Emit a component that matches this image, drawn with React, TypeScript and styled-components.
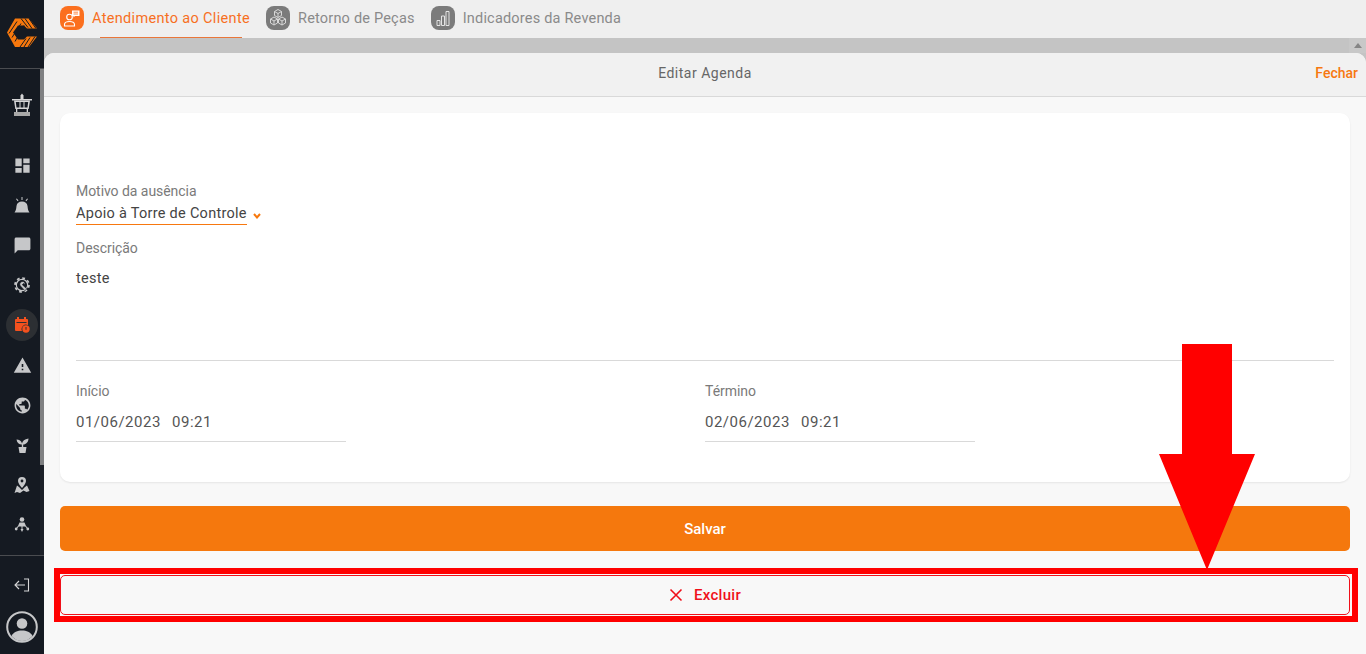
import React from "react";
import styled, { createGlobalStyle } from "styled-components";
import { MdDashboard, MdChatBubble, MdWarning, MdPublic } from "react-icons/md";

const Global = createGlobalStyle`
  html, body { margin: 0; padding: 0; height: 100%; overflow: hidden; background: #f8f8f8; }
  * { box-sizing: border-box; }
  body { font-family: "Roboto", "Liberation Sans", sans-serif; }
`;

const Page = styled.div`
  position: relative;
  display: flex;
  width: 1366px;
  height: 654px;
  overflow: hidden;
`;
const Sidebar = styled.aside`
  width: 44px;
  flex: none;
  background: #151a22;
  display: flex;
  flex-direction: column;
`;
const LogoBox = styled.div`
  height: 69px;
  border-bottom: 1px solid #4a4c50;
  display: flex;
  align-items: center;
  justify-content: center;
  padding: 0 0 4px 0;
`;
const NavArea = styled.div`
  height: 486px;
  display: flex;
`;
const NavList = styled.nav`
  width: 40px;
  padding-top: 16px;
  display: flex;
  flex-direction: column;
  align-items: center;
`;
const Track = styled.div`
  width: 4px;
  height: 100%;
  background: #1d2129;
`;
const Thumb = styled.div`
  width: 4px;
  height: 396px;
  background: #7f8082;
`;
const NavItem = styled.div<{ $active?: boolean; $gap?: boolean }>`
  width: 32px;
  height: 32px;
  margin: 4px 0;
  margin-bottom: ${(p) => (p.$gap ? "24px" : "4px")};
  margin-left: 4px;
  border-radius: 50%;
  display: flex;
  align-items: center;
  justify-content: center;
  color: #c6c7c9;
  background: ${(p) => (p.$active ? "#2c2f33" : "transparent")};
  flex: none;
`;
const SideFooter = styled.div`
  border-top: 1px solid #4a4c50;
  flex: 1;
  padding-top: 9px;
  display: flex;
  flex-direction: column;
  align-items: center;
  gap: 6px;
`;
const ExitSlot = styled(NavItem)`
  margin-left: 0;
`;
const Main = styled.main`
  flex: 1;
  display: flex;
  flex-direction: column;
  min-width: 0;
  background: #c4c4c4;
`;
const TabBar = styled.div`
  height: 38px;
  background: #efefef;
  display: flex;
  align-items: flex-start;
  padding: 6px 0 0 16px;
  flex: none;
`;
const Tab = styled.div<{ $active?: boolean }>`
  position: relative;
  display: flex;
  align-items: center;
  height: 24px;
  gap: 8px;
  margin-right: 16px;
  font-size: 14.5px;
  letter-spacing: ${(p) => (p.$active ? "0.33px" : "0.2px")};
  color: ${(p) => (p.$active ? "#f76f1f" : "#8a8a8a")};
  &::after {
    content: "";
    display: ${(p) => (p.$active ? "block" : "none")};
    position: absolute;
    left: 40px;
    width: 142px;
    top: 31px;
    height: 1px;
    background: #e9763a;
  }
`;
const TabIcon = styled.span<{ $active?: boolean }>`
  width: 24px;
  height: 24px;
  border-radius: 8px;
  background: ${(p) => (p.$active ? "#fb6f1e" : "#7b7b7b")};
  display: flex;
  align-items: center;
  justify-content: center;
  flex: none;
`;
const Band = styled.div`
  height: 15px;
  background: #c4c4c4;
  flex: none;
  display: flex;
  justify-content: flex-end;
`;
const ScrollUp = styled.div`
  width: 17px;
  background: #c8c8c8;
  display: flex;
  align-items: center;
  justify-content: center;
  &::before {
    content: "";
    border-left: 4px solid transparent;
    border-right: 4px solid transparent;
    border-bottom: 5px solid #858585;
  }
`;
const Sheet = styled.section`
  flex: 1;
  background: #f8f8f8;
  border-radius: 10px 10px 0 0;
  display: flex;
  flex-direction: column;
`;
const SheetHeader = styled.header`
  position: relative;
  height: 44px;
  flex: none;
  padding-bottom: 3px;
  background: #f1f1f1;
  border-radius: 10px 10px 0 0;
  border-bottom: 1px solid #d9d9d9;
  display: flex;
  align-items: center;
  justify-content: center;
  font-size: 14px;
  letter-spacing: 0.5px;
  color: #666;
`;
const Close = styled.span`
  position: absolute;
  right: 8px;
  top: 12px;
  font-size: 14px;
  font-weight: 500;
  letter-spacing: 0;
  color: #f7780f;
`;
const Body = styled.div`
  padding: 16px 16px 0;
  display: flex;
  flex-direction: column;
`;
const Card = styled.div`
  height: 369px;
  background: #fff;
  border-radius: 10px;
  box-shadow: 0 1px 2px rgba(0, 0, 0, 0.08);
  padding: 69px 16px 0;
`;
const Label = styled.div`
  height: 18px;
  line-height: 18px;
  font-size: 14px;
  letter-spacing: -0.05px;
  color: #7a7a7a;
`;
const SelectRow = styled.div`
  display: flex;
  align-items: flex-end;
  gap: 6px;
  height: 25px;
  margin-bottom: 14px;
`;
const SelectValue = styled.div`
  height: 25px;
  line-height: 24px;
  padding-top: 2px;
  border-bottom: 1px solid #f7780f;
  font-size: 14.5px;
  letter-spacing: 0.28px;
  color: #444;
`;
const Chevron = styled.svg`
  width: 8px;
  height: 6px;
  margin-bottom: 6px;
`;
const DescText = styled.div`
  height: 104px;
  padding-top: 12px;
  border-bottom: 1px solid #d9d9d9;
  font-size: 14.5px;
  line-height: 20px;
  letter-spacing: 0.25px;
  color: #444;
`;
const DateGrid = styled.div`
  display: grid;
  grid-template-columns: 629px 1fr;
  padding-top: 21px;
`;
const DateField = styled.div`
  width: 270px;
`;
const DateValue = styled.div`
  height: 39px;
  margin-top: 3px;
  padding-top: 9px;
  line-height: 20px;
  border-bottom: 1px solid #d9d9d9;
  font-size: 15px;
  letter-spacing: 0.5px;
  color: #555;
  word-spacing: 7px;
`;
const SaveButton = styled.button`
  height: 45px;
  margin-top: 24px;
  border: 0;
  border-radius: 5px;
  background: #f5780d;
  color: #fff;
  font: 500 15px "Roboto", sans-serif;
`;
const DeleteButton = styled.button`
  height: 40px;
  margin-top: 24px;
  border: 1px solid #f0101a;
  border-radius: 5px;
  background: #f8f8f8;
  color: #f0101a;
  font: 500 15px "Roboto", sans-serif;
  letter-spacing: 0.3px;
  display: flex;
  align-items: center;
  justify-content: center;
  gap: 11px;
`;
const Highlight = styled.div`
  position: absolute;
  left: 54px;
  top: 568px;
  width: 1304px;
  height: 54px;
  border: 6px solid #ff0000;
  pointer-events: none;
`;
const ArrowMark = styled.svg`
  position: absolute;
  left: 1158px;
  top: 343px;
  width: 98px;
  height: 230px;
  pointer-events: none;
`;

const Logo = () => (
  <svg width="30" height="29" viewBox="0 0 30 29">
    <path d="M8 0.500h14l8 10h-10l-3-3H11l-5 7 5 7h6l3-3h10l-8 10.500H8L0 14.500z" fill="#f7780d" />
    <g stroke="#151a22" strokeWidth="1" fill="none">
      <path d="M2 15.500 10 3.500M5 19.500l9-14M8 23.500 17 7.500M18 .5l7 10M22 .5l7 10M14 .5l7 9M21 29l7-10.500M17 29l6-9.500M13 29l6-8.500" />
    </g>
  </svg>
);
const Tower = () => (
  <svg width="20" height="24" viewBox="0 0 20 24" fill="#d5d5d6">
    <path d="M8.500 2.500 10 .5l1.500 2V6h-3z" />
    <path d="M0 6h20v1.500H0z" />
    <path d="M2 7.500h16l-1.300 8.500H3.300zM3.800 9l.7 5.500h3V9zm4.700 0v5.500h3V9zm4 0v5.500h3l.7-5.500z" fillRule="evenodd" />
    <path d="M4 16h1.300v3H4zM14.700 16H16v3h-1.300z" />
    <path d="M2 19h16v4H2z" fill="#a8a8a8" />
  </svg>
);
const Alarm = () => (
  <svg width="16" height="16" viewBox="0 0 16 16" fill="currentColor">
    <path d="M.5 15.500c1.200-1.500 1.700-3 2-6.500C2.800 6 5 4.500 8 4.500S13.200 6 13.500 9c.3 3.500.8 5 2 6.500z" />
    <path d="M7.500 0h1v3h-1zM2 2l.8-.6 1.700 2.200-.8.6zM13.200 1.400l.8.600-1.700 2.200-.8-.6z" />
  </svg>
);
const Gear = () => (
  <svg width="16" height="16" viewBox="0 0 24 24" fill="none" stroke="currentColor">
    <circle cx="12" cy="12" r="8.500" strokeWidth="1.800" />
    <circle cx="12" cy="12" r="10.500" strokeWidth="2.600" strokeDasharray="4.200 4.050" />
    <path d="M14.500 7c-3-1-6 1-5.800 4 .1 1 .5 2 1 2.500l6.500 7 3-2.700-6.800-6.300 1.800-1.800 2.200 1.500c.3-2-.4-3.500-1.900-4.200z" fill="currentColor" stroke="#151a22" strokeWidth="1" />
  </svg>
);
const CalendarBadge = () => (
  <svg width="16" height="16" viewBox="0 0 16 16" fill="#f4511e">
    <path d="M3 0h2v2h5V0h2v2h1a1 1 0 0 1 1 1v5a4.500 4.500 0 0 0-6 6H2a1 1 0 0 1-1-1V3a1 1 0 0 1 1-1h1zM2.500 5v1h10V5z" fillRule="evenodd" />
    <circle cx="12" cy="12" r="3.700" />
    <path d="M11.500 10h1v2.800h-1z" fill="#2c2f33" />
  </svg>
);
const Plant = () => (
  <svg width="15" height="15" viewBox="0 0 15 15" fill="currentColor">
    <path d="M3.500 9h8l-1 6h-6zM6.800 9V6.500C4 6.500 2 5 1.500 1.500 4 1.500 6.500 3 7 5.500 7.500 3 9.500 1 13.500.5 13.500 4 11 6.500 8.200 6.500V9z" />
  </svg>
);
const MapPin = () => (
  <svg width="16" height="16" viewBox="0 0 16 16" fill="currentColor">
    <path d="M8 0a4 4 0 0 1 4 4c0 2.500-2.500 5-4 7-1.500-2-4-4.500-4-7a4 4 0 0 1 4-4zm0 2.600a1.400 1.400 0 1 0 0 2.800 1.400 1.400 0 0 0 0-2.800z" fillRule="evenodd" />
    <path d="M3 8.500 5 10l3 3 3-3 2-1.500 2.500 5.500-3 1-3-1.500L6 16l-3-1-2.500 1z" />
  </svg>
);
const Network = () => (
  <svg width="16" height="16" viewBox="0 0 16 16" fill="currentColor">
    <circle cx="8" cy="2.500" r="2.300" />
    <path d="M5.500 5.500h5L12 9l1.500 1.500-.7.7-1.600-1.700H8.500v2.500h1L8 15l-1.500-3h1V9.500H4.800l-1.600 1.700-.7-.7L4 9z" />
    <circle cx="2.200" cy="12" r="1.400" />
    <circle cx="13.800" cy="12" r="1.400" />
  </svg>
);
const ExitIcon = () => (
  <svg width="16" height="14" viewBox="0 0 16 14" fill="none" stroke="#d6d6d7" strokeWidth="1.100">
    <path d="M10 1h4.500v12H10M11 7H1M5 3 1 7l4 4" />
  </svg>
);
const Avatar = () => (
  <svg width="32" height="32" viewBox="0 0 32 32">
    <circle cx="16" cy="16" r="14.800" fill="none" stroke="#c6c7c9" strokeWidth="2" />
    <circle cx="16" cy="12.500" r="5.300" fill="#c6c7c9" />
    <path d="M5.500 25c2-4 6-5.500 10.500-5.500S24.500 21 26.500 25C24 28 20 30 16 30S8 28 5.500 25z" fill="#c6c7c9" />
  </svg>
);
const AgentIcon = () => (
  <svg width="18" height="18" viewBox="0 0 18 18" fill="none" stroke="#fff" strokeWidth="1.100">
    <circle cx="6.500" cy="8" r="2.800" />
    <path d="M1.500 17v-1.500c0-2 2-3 5-3s5 1 5 3V17z" />
    <path d="M9 1.500h7.500v5.500H12l-1.500 1.500V7H9z" fill="#fff" stroke="none" />
    <path d="M10.500 3.200h4.500M10.500 5h4.500" stroke="#fb6f1e" strokeWidth="0.800" />
  </svg>
);
const PartsIcon = () => (
  <svg width="20" height="20" viewBox="0 0 20 20" fill="none" stroke="#d8d8d8" strokeWidth="1" strokeLinejoin="round">
    <path d="M10 1.500l3.500 2v4L10 9.500l-3.500-2v-4zM6 9l3.500 2v4L6 17l-3.500-2v-4zM14 9l3.500 2v4L14 17l-3.500-2v-4z" />
    <path d="M6.500 3.500 10 5.500l3.500-2M10 5.500v4M2.500 11 6 13l3.500-2M6 13v4M10.500 11l3.500 2 3.500-2M14 13v4" />
  </svg>
);
const BarsIcon = () => (
  <svg width="18" height="18" viewBox="0 0 18 18" fill="none" stroke="#e4e4e4" strokeWidth="1">
    <path d="M3 11.500h3v5H3zM7.500 7h3v9.500h-3zM12 2.500h3v14h-3z" />
  </svg>
);

export default function App() {
  return (
    <Page>
      <Global />
      <Sidebar>
        <LogoBox>
          <Logo />
        </LogoBox>
        <NavArea>
          <NavList>
            <NavItem $gap><Tower /></NavItem>
            <NavItem><MdDashboard size={19} /></NavItem>
            <NavItem><Alarm /></NavItem>
            <NavItem><MdChatBubble size={19} /></NavItem>
            <NavItem><Gear /></NavItem>
            <NavItem $active><CalendarBadge /></NavItem>
            <NavItem><MdWarning size={19} /></NavItem>
            <NavItem><MdPublic size={19} /></NavItem>
            <NavItem><Plant /></NavItem>
            <NavItem><MapPin /></NavItem>
            <NavItem><Network /></NavItem>
          </NavList>
          <Track>
            <Thumb />
          </Track>
        </NavArea>
        <SideFooter>
          <ExitSlot><ExitIcon /></ExitSlot>
          <Avatar />
        </SideFooter>
      </Sidebar>
      <Main>
        <TabBar>
          <Tab $active>
            <TabIcon $active><AgentIcon /></TabIcon>
            Atendimento ao Cliente
          </Tab>
          <Tab>
            <TabIcon><PartsIcon /></TabIcon>
            Retorno de Peças
          </Tab>
          <Tab>
            <TabIcon><BarsIcon /></TabIcon>
            Indicadores da Revenda
          </Tab>
        </TabBar>
        <Band>
          <ScrollUp />
        </Band>
        <Sheet>
          <SheetHeader>
            Editar Agenda
            <Close>Fechar</Close>
          </SheetHeader>
          <Body>
            <Card>
              <Label>Motivo da ausência</Label>
              <SelectRow>
                <SelectValue>Apoio à Torre de Controle</SelectValue>
                <Chevron viewBox="0 0 8 6">
                  <path d="M1 1 4 4.500 7 1" fill="none" stroke="#f7780d" strokeWidth="2" />
                </Chevron>
              </SelectRow>
              <Label>Descrição</Label>
              <DescText>teste</DescText>
              <DateGrid>
                <DateField>
                  <Label>Início</Label>
                  <DateValue>01/06/2023 09:21</DateValue>
                </DateField>
                <DateField>
                  <Label>Término</Label>
                  <DateValue>02/06/2023 09:21</DateValue>
                </DateField>
              </DateGrid>
            </Card>
            <SaveButton>Salvar</SaveButton>
            <DeleteButton>
              <svg width="14" height="14" viewBox="0 0 14 14">
                <path d="M1.500 1.500l11 11M12.500 1.500l-11 11" stroke="#f0101a" strokeWidth="1.600" />
              </svg>
              Excluir
            </DeleteButton>
          </Body>
        </Sheet>
      </Main>
      <Highlight />
      <ArrowMark viewBox="0 0 98 230">
        <path d="M24 1h50v110h23L49 227 1 111h23z" fill="#ff0000" />
      </ArrowMark>
    </Page>
  );
}
